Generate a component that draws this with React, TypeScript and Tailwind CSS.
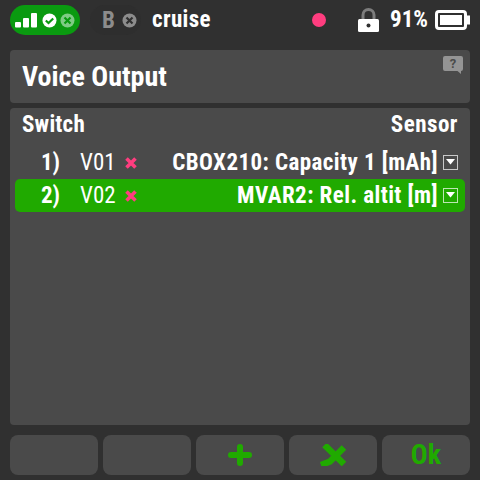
import React from "react";

const XMark = () => (
  <svg width="12" height="12" viewBox="0 0 12 12" className="block">
    <path d="M1.5 1.5 L10.5 10.5 M10.5 1.5 L1.5 10.5" stroke="#ff3d7f" strokeWidth="3.6" strokeLinecap="butt" />
  </svg>
);

const Drop = () => (
  <svg width="15" height="15" viewBox="0 0 15 15" className="block">
    <rect x="0.5" y="0.5" width="14" height="14" fill="none" stroke="currentColor" strokeOpacity="0.7" />
    <path d="M3 4 H12 L7.5 9.5 Z" fill="currentColor" />
  </svg>
);

const Row = ({ n, v, s, active }: { n: string; v: string; s: string; active?: boolean }) => (
  <div className={`flex items-center h-[33px] rounded-[5px] ${active ? "bg-[#20aa00]" : ""} text-white`}>
    <span className="w-[45px] mt-[1px] text-right font-bold text-[23px] [font-stretch:85%]">{n}</span>
    <span className="ml-[20px] mt-[1px] w-[37px] text-[23px] font-normal [font-stretch:85%]">{v}</span>
    <span className="ml-[8px]"><XMark /></span>
    <span className="flex-1 mt-[1px] text-right font-bold text-[23px] whitespace-nowrap [font-stretch:85%] tracking-[0.42px]">{s}</span>
    <span className="ml-[5px] mr-[7px]"><Drop /></span>
  </div>
);

const Btn = ({ children }: { children?: React.ReactNode }) => (
  <div className="w-[88px] h-[40px] rounded-[8px] bg-[#4a4a4a] flex items-center justify-center text-[#20aa00]">{children}</div>
);

export default function App() {
  return (
    <div className="w-[480px] h-[480px] bg-[#303030] overflow-hidden flex flex-col font-['Roboto',sans-serif] text-white">
      <div className="h-[40px] flex items-center pl-[10px] pr-[10px]">
        <div className="w-[70px] h-[30px] rounded-full bg-[#0a9a10] flex items-center pl-[5px]">
          <svg width="22" height="16" viewBox="0 0 22 16" className="block mt-[-1px]">
            <rect x="0" y="10" width="6" height="5.5" rx="1" fill="#fff" />
            <rect x="8" y="6" width="6" height="9.5" rx="1" fill="#fff" />
            <rect x="16" y="1" width="6" height="14.5" rx="1" fill="#fff" />
          </svg>
          <svg width="15" height="15" viewBox="0 0 15 15" className="block ml-[5px]">
            <circle cx="7.5" cy="7.5" r="7" fill="#fff" />
            <path d="M3.8 7.5 L6.5 10 L11.2 5.5" stroke="#0a9a10" strokeWidth="2.2" fill="none" />
          </svg>
          <svg width="15" height="15" viewBox="0 0 15 15" className="block ml-[3px]">
            <circle cx="7.5" cy="7.5" r="7" fill="#7fcb85" />
            <path d="M4.5 4.5 L10.5 10.5 M10.5 4.5 L4.5 10.5" stroke="#0a9a10" strokeWidth="2.2" />
          </svg>
        </div>
        <div className="ml-[10px] w-[51px] h-[30px] rounded-full bg-[#2e2e2e] flex items-center pl-[12px]">
          <span className="text-[#8c8c8c] font-bold text-[23px] leading-none [font-stretch:85%]">B</span>
          <svg width="15" height="15" viewBox="0 0 15 15" className="block ml-[7px]">
            <circle cx="7.5" cy="7.5" r="7" fill="#8c8c8c" />
            <path d="M4.5 4.5 L10.5 10.5 M10.5 4.5 L4.5 10.5" stroke="#303030" strokeWidth="2.2" />
          </svg>
        </div>
        <span className="ml-[11px] font-bold text-[23px] leading-none mt-[-1px] [font-stretch:85%] tracking-[0.35px]">cruise</span>
        <div className="flex-1" />
        <div className="w-[14px] h-[14px] rounded-full bg-[#ff3d7f] mr-[32px]" />
        <svg width="21" height="25" viewBox="0 0 21 25" className="block mr-[11px]">
          <path d="M5 11 V7 A5.5 5.5 0 0 1 16 7 V11" fill="none" stroke="#7d7d7d" strokeWidth="3" />
          <rect x="0" y="11" width="21" height="13" rx="1.5" fill="#fff" />
          <circle cx="10.5" cy="17.5" r="2" fill="#303030" />
        </svg>
        <span className="font-bold text-[23px] leading-none mr-[7px] mt-[-1px] [font-stretch:85%]">91%</span>
        <svg width="35" height="20" viewBox="0 0 35 20" className="block">
          <rect x="1.5" y="1.5" width="29" height="17" rx="2.5" fill="none" stroke="#fff" strokeWidth="3" />
          <rect x="5" y="5" width="22" height="10" fill="#fff" />
          <rect x="32" y="5.5" width="3" height="9" fill="#fff" />
        </svg>
      </div>
      <div className="mx-[10px] mt-[10px] h-[53px] rounded-[4px] bg-[#4a4a4a] flex items-center pl-[12px] relative">
        <span className="font-bold text-[28px] leading-none [font-stretch:85%]">Voice Output</span>
        <svg width="20" height="18" viewBox="0 0 20 18" className="absolute right-[7px] top-[6px]">
          <path d="M2 0 H18 A2 2 0 0 1 20 2 V13 A2 2 0 0 1 18 15 V18 L14.5 15 H2 A2 2 0 0 1 0 13 V2 A2 2 0 0 1 2 0 Z" fill="#949494" />
          <text x="10" y="12" textAnchor="middle" fontSize="13" fontWeight="700" fill="#4a4a4a" fontFamily="Roboto">?</text>
        </svg>
      </div>
      <div className="mx-[10px] mt-[5px] h-[317px] rounded-[4px] bg-[#4a4a4a] px-[5px]">
        <div className="h-[32px] pt-[2px] flex items-center justify-between px-[7px] font-bold text-[23px] [font-stretch:85%]">
          <span className="tracking-[0.2px]">Switch</span>
          <span className="tracking-[0.5px]">Sensor</span>
        </div>
        <div className="mt-[6px]">
          <Row n="1)" v="V01" s="CBOX210: Capacity 1 [mAh]" />
          <Row n="2)" v="V02" s="MVAR2: Rel. altit [m]" active />
        </div>
      </div>
      <div className="mx-[10px] mt-[10px] flex gap-[5px]">
        <Btn />
        <Btn />
        <Btn>
          <svg width="24" height="22" viewBox="0 0 24 22"><path d="M12 3 V19 M3 11 H21" stroke="#20aa00" strokeWidth="6" strokeLinecap="round" /></svg>
        </Btn>
        <Btn>
          <svg width="26" height="22" viewBox="0 0 26 22"><path d="M4.5 1 L24 20 M24 3.5 L10 17.5 L1 21" stroke="#20aa00" strokeWidth="6.5" fill="none" /></svg>
        </Btn>
        <Btn><span className="font-bold text-[28px] leading-none mt-[-1px] [font-stretch:85%]">Ok</span></Btn>
      </div>
    </div>
  );
}
